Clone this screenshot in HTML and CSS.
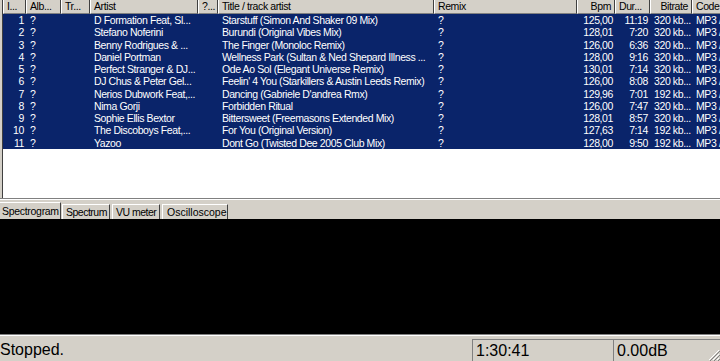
FILE: index.html
```html
<!DOCTYPE html>
<html lang="en">
<head>
    <meta charset="UTF-8">
    <title>Playlist</title>
    <link rel="stylesheet" href="styles.css">
</head>
<body>
    <div class="app">
        <div class="list-wrap">
            <div class="list">
                <div class="row head">
                    <div class="hc">I...</div>
                    <div class="hc">Alb...</div>
                    <div class="hc">Tr...</div>
                    <div class="hc">Artist</div>
                    <div class="hc">?...</div>
                    <div class="hc">Title / track artist</div>
                    <div class="hc">Remix</div>
                    <div class="hc right">Bpm</div>
                    <div class="hc">Dur...</div>
                    <div class="hc right">Bitrate</div>
                    <div class="hc">Code</div>
                </div>
                <div class="rows" id="rows"></div>
            </div>
        </div>

        <div class="tabs">
            <div class="tab active">Spectrogram</div>
            <div class="tab t-spectrum">Spectrum</div>
            <div class="tab t-vu">VU meter</div>
            <div class="tab t-osc">Oscilloscope</div>
        </div>

        <div class="scope"></div>

        <div class="status">
            <div class="panel main">Stopped.</div>
            <div class="panel time">1:30:41</div>
            <div class="panel gain">0.00dB</div>
            <svg class="grip" width="12" height="12" viewBox="0 0 12 12">
                <path d="M11 1 L1 11 M11 5 L5 11 M11 9 L9 11" stroke="#fff" stroke-width="1"/>
                <path d="M12 2 L2 12 M12 6 L6 12 M12 10 L10 12" stroke="#808080" stroke-width="1"/>
            </svg>
        </div>
    </div>

    <script>
        // lista de faixas
        var faixas = [
            ["1", "D Formation Feat, Sl...", "Starstuff (Simon And Shaker 09 Mix)", "125,00", "11:19", "320 kb..."],
            ["2", "Stefano Noferini", "Burundi (Original Vibes Mix)", "128,01", "7:20", "320 kb..."],
            ["3", "Benny Rodrigues & ...", "The Finger (Monoloc Remix)", "126,00", "6:36", "320 kb..."],
            ["4", "Daniel Portman", "Wellness Park (Sultan & Ned Shepard Illness ...", "128,00", "9:16", "320 kb..."],
            ["5", "Perfect Stranger & DJ...", "Ode Ao Sol (Elegant Universe Remix)", "130,01", "7:14", "320 kb..."],
            ["6", "DJ Chus & Peter Gel...", "Feelin' 4 You (Starkillers & Austin Leeds Remix)", "126,00", "8:08", "320 kb..."],
            ["7", "Nerios Dubwork Feat,...", "Dancing (Gabriele D'andrea Rmx)", "129,96", "7:01", "192 kb..."],
            ["8", "Nima Gorji", "Forbidden Ritual", "126,00", "7:47", "320 kb..."],
            ["9", "Sophie Ellis Bextor", "Bittersweet (Freemasons Extended Mix)", "128,01", "8:57", "320 kb..."],
            ["10", "The Discoboys Feat,...", "For You (Original Version)", "127,63", "7:14", "192 kb..."],
            ["11", "Yazoo", "Dont Go (Twisted Dee 2005 Club Mix)", "128,00", "9:50", "192 kb..."]
        ];

        var html = "";
        for (var i = 0; i < faixas.length; i++) {
            var f = faixas[i];
            html += '<div class="row sel">' +
                '<div class="c right">' + f[0] + '</div>' +
                '<div class="c">?</div>' +
                '<div class="c"></div>' +
                '<div class="c">' + f[1] + '</div>' +
                '<div class="c"></div>' +
                '<div class="c">' + f[2] + '</div>' +
                '<div class="c">?</div>' +
                '<div class="c right">' + f[3] + '</div>' +
                '<div class="c right">' + f[4] + '</div>' +
                '<div class="c">' + f[5] + '</div>' +
                '<div class="c">MP3 /</div>' +
                '</div>';
        }
        document.getElementById("rows").innerHTML = html;
    </script>
</body>
</html>
```

FILE: styles.css
```css
body {
    margin: 0;
    background-color: #d4d0c8;
    font-family: "Liberation Sans", Arial, sans-serif;
    overflow: hidden;
}
.app {
    width: 720px;
    height: 361px;
    display: flex;
    flex-direction: column;
}
.list-wrap {
    height: 198px;
    padding-left: 2px;
    border-bottom: 1px solid #808080;
    box-shadow: 0 1px 0 #fff;
}
.list {
    height: 198px;
    background-color: #fff;
    border-left: 1px solid #404040;
    overflow: hidden;
}
.row {
    display: grid;
    grid-template-columns: 23px 35px 29px 108px 20px 216px 143px 38px 35px 42px 80px;
    width: 800px;
    font-size: 10.5px;
    letter-spacing: -0.4px;
    white-space: nowrap;
}
.head {
    height: 14px;
    background-color: #d4d0c8;
    color: #000;
}
.hc {
    line-height: 13px;
    padding: 0 3px;
    border-left: 1px solid #fff;
    border-right: 1px solid #404040;
    border-bottom: 1px solid #808080;
    overflow: hidden;
}
.sel {
    height: 12.27px;
    background-color: #0a246a;
    color: #fff;
}
.c {
    line-height: 12px;
    padding: 0 3px 0 4px;
    overflow: hidden;
}
.right {
    text-align: right;
}
.c.right {
    padding: 0 2px 0 0;
}
.tabs {
    height: 20px;
    display: flex;
    align-items: flex-end;
    font-size: 10.5px;
    letter-spacing: -0.3px;
    white-space: nowrap;
}
.tab {
    height: 14px;
    line-height: 15px;
    padding: 0 0 0 4px;
    margin-right: 2px;
    box-sizing: content-box;
    border-top: 1px solid #fff;
    border-left: 1px solid #fff;
    border-right: 1px solid #404040;
    overflow: hidden;
}
.tab.active {
    width: 58px;
    height: 16px;
    line-height: 16px;
    padding: 0 0 0 2px;
    margin-right: 1px;
    border-left: none;
}
.t-spectrum {
    width: 43px;
    padding-left: 3px;
    letter-spacing: -0.5px;
}
.t-vu {
    width: 43px;
    padding-left: 3px;
    letter-spacing: -0.5px;
}
.t-osc {
    width: 60px;
    letter-spacing: 0;
}
.scope {
    height: 115px;
    background-color: #000;
}
.status {
    flex: 1;
    display: flex;
    align-items: flex-end;
    border-top: 1px solid #808080;
    box-shadow: inset 0 1px 0 #fff;
    position: relative;
    font-size: 16px;
}
.panel {
    height: 22px;
    line-height: 22px;
    box-sizing: border-box;
}
.panel.main {
    width: 472px;
}
.panel.time {
    width: 141px;
    padding-left: 3px;
    border-left: 1px solid #808080;
    border-top: 1px solid #808080;
}
.panel.gain {
    flex: 1;
    padding-left: 3px;
    border-left: 1px solid #808080;
    border-top: 1px solid #808080;
}
.grip {
    position: absolute;
    right: 0;
    bottom: 0;
}
```
